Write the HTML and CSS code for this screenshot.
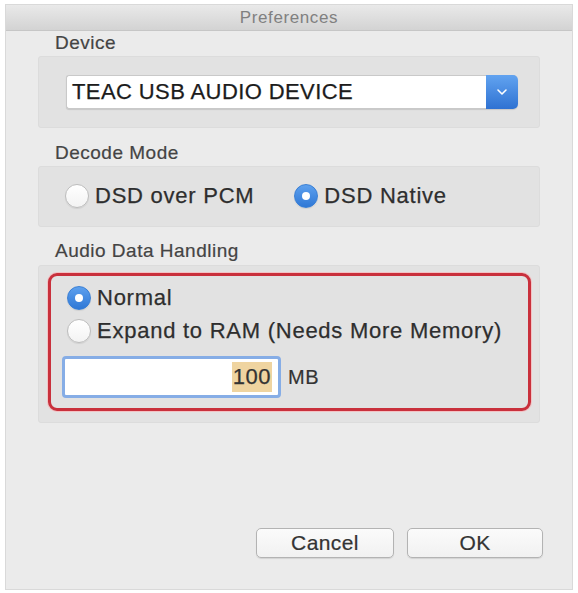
FILE: index.html
```html
<!DOCTYPE html>
<html>
<head>
<meta charset="utf-8">
<title>Preferences</title>
<link rel="stylesheet" href="styles.css">
</head>
<body>
<div class="window">
  <div class="titlebar">Preferences</div>
  <div class="content">
    <div class="label first">Device</div>
    <div class="group device">
      <div class="popup">
        <span class="popup-text">TEAC USB AUDIO DEVICE</span>
        <span class="popup-btn">
          <svg width="12" height="8" viewBox="0 0 12 8"><polyline points="2,2 6,6 10,2" fill="none" stroke="#ffffff" stroke-width="1.6" stroke-linecap="round" stroke-linejoin="round"/></svg>
        </span>
      </div>
    </div>

    <div class="label">Decode Mode</div>
    <div class="group decode">
      <div class="radio-item"><span class="radio"></span><span class="rtext">DSD over PCM</span></div>
      <div class="radio-item second"><span class="radio on"></span><span class="rtext">DSD Native</span></div>
    </div>

    <div class="label third">Audio Data Handling</div>
    <div class="group handling">
      <div class="highlight">
        <div class="radio-item row"><span class="radio on"></span><span class="rtext">Normal</span></div>
        <div class="radio-item row"><span class="radio"></span><span class="rtext">Expand to RAM (Needs More Memory)</span></div>
        <div class="field-row">
          <div class="field"><span class="sel">100</span></div>
          <span class="unit">MB</span>
        </div>
      </div>
    </div>
  </div>
  <div class="buttons">
    <div class="btn cancel">Cancel</div>
    <div class="btn ok">OK</div>
  </div>
</div>
</body>
</html>
```
FILE: styles.css
```css
html, body {
  margin: 0;
  padding: 0;
  background: #ffffff;
}
body {
  font-family: "Liberation Sans", Arial, sans-serif;
  padding: 4px 0 0 5px;
}
.window {
  box-sizing: border-box;
  width: 568px;
  height: 586px;
  background: #ebebeb;
  border: 1px solid #d9d9d9;
  display: flex;
  flex-direction: column;
}
.titlebar {
  box-sizing: border-box;
  height: 26px;
  line-height: 25px;
  text-align: center;
  font-size: 17px;
  letter-spacing: 0.6px;
  color: #808080;
  background: linear-gradient(#e9e9e9, #d3d3d3);
  border-bottom: 1px solid #c6c6c6;
}
.content {
  padding: 0 32px;
}
.label {
  font-size: 19px;
  line-height: 22px;
  letter-spacing: 0.5px;
  color: #444444;
  -webkit-text-stroke: 0.2px #444444;
  margin: 14px 0 2px 17px;
}
.label.first { margin-top: 1px; }
.label.third { margin-top: 13px; margin-bottom: 3px; }
.group {
  box-sizing: border-box;
  background: #e2e2e2;
  border: 1px solid #dcdcdc;
  border-radius: 3px;
}
.group.device {
  height: 72px;
  padding: 18px 21px 0 27px;
}
.popup {
  box-sizing: border-box;
  height: 34px;
  display: flex;
  background: #ffffff;
  border: 1px solid #c9c9c9;
  border-right: none;
  border-radius: 3px 5px 5px 3px;
  box-shadow: 0 1px 1px rgba(0,0,0,0.12);
}
.popup-text {
  flex: 1;
  font-size: 22px;
  line-height: 32px;
  letter-spacing: 0.4px;
  color: #1c1c1c;
  -webkit-text-stroke: 0.25px #1c1c1c;
  padding-left: 5px;
}
.popup-btn {
  width: 32px;
  margin-top: -1px;
  height: 34px;
  border-radius: 0 5px 5px 0;
  background: linear-gradient(#62a3f0, #2f72d2);
  display: flex;
  align-items: center;
  justify-content: center;
}
.group.decode {
  height: 61px;
  padding: 15px 0 0 26px;
  display: flex;
}
.radio-item {
  display: flex;
  align-items: center;
  height: 28px;
}
.radio-item.second { margin-left: 40px; }
.radio {
  box-sizing: border-box;
  width: 24px;
  height: 24px;
  border-radius: 50%;
  background: linear-gradient(#ffffff, #f3f3f3);
  border: 1px solid #bdbdbd;
  box-shadow: 0 1px 1px rgba(0,0,0,0.08);
  display: flex;
  align-items: center;
  justify-content: center;
  margin-right: 6px;
  flex: none;
}
.radio.on {
  background: linear-gradient(#5da0ee, #2f78d6);
  border-color: #3a7fd4;
}
.radio.on::after {
  content: "";
  width: 8px;
  height: 8px;
  border-radius: 50%;
  background: #ffffff;
}
.rtext {
  font-size: 22px;
  line-height: 28px;
  letter-spacing: 0.75px;
  color: #2e2e2e;
  -webkit-text-stroke: 0.25px #2e2e2e;
}
.group.handling {
  height: 158px;
  padding: 7px 8px 0 9px;
}
.highlight {
  box-sizing: border-box;
  height: 138px;
  border: 3px solid #c9303c;
  border-radius: 9px;
  box-shadow: 0 0 0 1px #f3c2c4;
  padding: 8px 0 0 16px;
}
.highlight .row + .row { margin-top: 5px; }
.field-row {
  display: flex;
  align-items: center;
  margin: 11px 0 0 -5px;
}
.field {
  box-sizing: border-box;
  width: 219px;
  height: 42px;
  background: #ffffff;
  border: 3px solid #86ade6;
  border-radius: 4px;
  display: flex;
  align-items: center;
  justify-content: flex-end;
  padding-right: 6px;
}
.sel {
  font-size: 22px;
  line-height: 30px;
  letter-spacing: 0.5px;
  color: #333333;
  -webkit-text-stroke: 0.25px #333333;
  background: #efd4a0;
  padding: 0 1px;
}
.unit {
  font-size: 20px;
  letter-spacing: 0.5px;
  color: #333333;
  -webkit-text-stroke: 0.2px #333333;
  margin-left: 7px;
}
.buttons {
  margin-top: auto;
  display: flex;
  justify-content: flex-end;
  gap: 13px;
  padding: 0 29px 31px 0;
}
.btn {
  box-sizing: border-box;
  height: 30px;
  border: 1px solid #b3b3b3;
  border-radius: 5px;
  background: linear-gradient(#fbfbfb, #f1f1f1);
  box-shadow: 0 1px 1px rgba(0,0,0,0.1);
  text-align: center;
  font-size: 21px;
  line-height: 28px;
  letter-spacing: 0.4px;
  color: #333333;
  -webkit-text-stroke: 0.2px #333333;
}
.btn.cancel { width: 138px; }
.btn.ok { width: 136px; }
```
